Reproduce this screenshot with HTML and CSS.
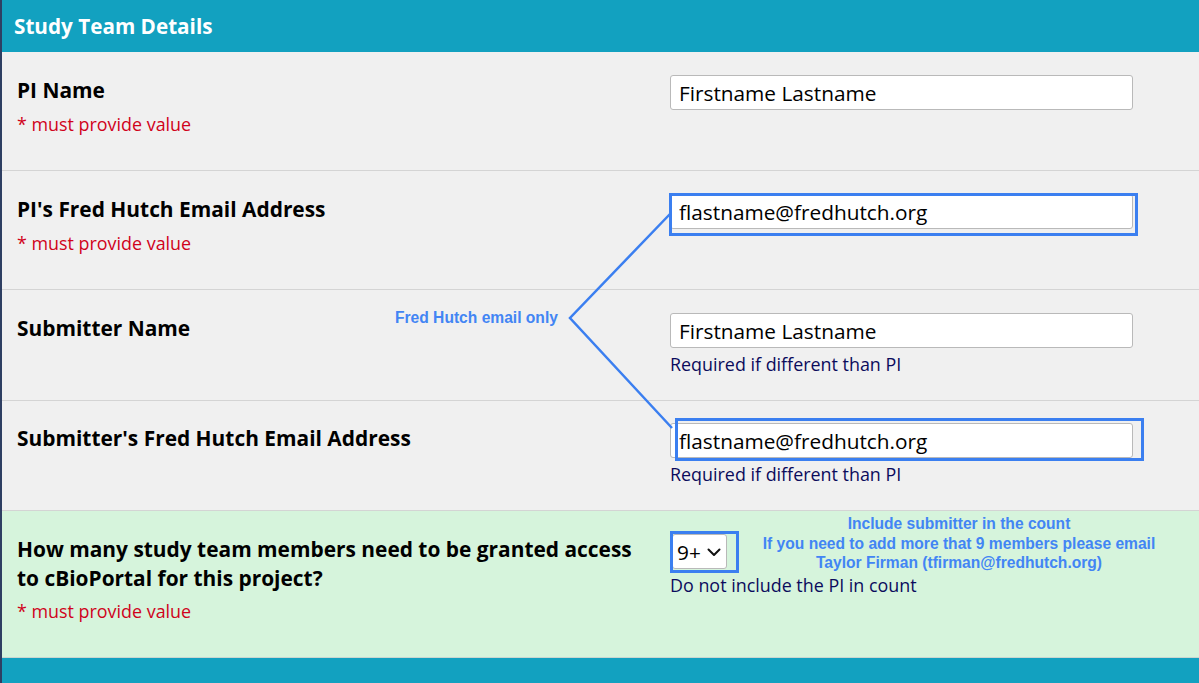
FILE: index.html
```html
<!DOCTYPE html>
<html lang="en">
<head>
<meta charset="utf-8">
<title>Study Team Details</title>
<link rel="stylesheet" href="styles.css">
</head>
<body>
<div class="page">
  <div class="header">Study Team Details</div>

  <div class="row row--std">
    <div class="label-col">
      <div class="label">PI Name</div>
      <div class="req">* must provide value</div>
    </div>
    <div class="field-col">
      <input class="text-input" type="text" value="Firstname Lastname">
    </div>
  </div>

  <div class="row row--std">
    <div class="label-col">
      <div class="label">PI's Fred Hutch Email Address</div>
      <div class="req">* must provide value</div>
    </div>
    <div class="field-col">
      <input class="text-input" type="text" value="flastname@fredhutch.org">
    </div>
  </div>

  <div class="row row--short">
    <div class="label-col">
      <div class="label">Submitter Name</div>
    </div>
    <div class="field-col">
      <input class="text-input" type="text" value="Firstname Lastname">
      <div class="help">Required if different than PI</div>
    </div>
  </div>

  <div class="row row--short2">
    <div class="label-col">
      <div class="label">Submitter's Fred Hutch Email Address</div>
    </div>
    <div class="field-col">
      <input class="text-input" type="text" value="flastname@fredhutch.org">
      <div class="help">Required if different than PI</div>
    </div>
  </div>

  <div class="row row--green">
    <div class="label-col">
      <div class="label label--wrap">How many study team members need to be granted access to cBioPortal for this project?</div>
      <div class="req">* must provide value</div>
    </div>
    <div class="field-col field-col--select">
      <div class="select-wrap">
        <select class="select">
          <option>9+</option>
        </select>
        <svg class="chev" width="14" height="9" viewBox="0 0 14 9"><path d="M1.5 1.5 L7 7 L12.5 1.5" fill="none" stroke="#111" stroke-width="2" stroke-linecap="round" stroke-linejoin="round"/></svg>
      </div>
      <div class="help">Do not include the PI in count</div>
    </div>
  </div>

  <div class="footer"></div>

  <svg class="annot-svg" width="1199" height="683" viewBox="0 0 1199 683">
    <g fill="none" stroke="#3b7ff0" stroke-width="3">
      <rect x="670.5" y="194.5" width="466" height="40"/>
      <rect x="676.5" y="419.5" width="466" height="40"/>
      <rect x="671.5" y="532.5" width="66" height="39"/>
      <polyline points="670,214 570,318 672,428" stroke-width="2.5"/>
    </g>
  </svg>
  <div class="annot annot--email">Fred Hutch email only</div>
  <div class="annot annot--count">Include submitter in the count<br>If you need to add more that 9 members please email<br>Taylor Firman (tfirman@fredhutch.org)</div>
</div>
</body>
</html>
```

FILE: styles.css
```css
html, body {
  margin: 0;
  padding: 0;
}
body {
  font-family: "Open Sans", "Noto Sans", sans-serif;
  background: #f0f0f0;
}
.page {
  position: relative;
  width: 1199px;
  height: 683px;
  overflow: hidden;
  border-left: 2px solid #2e3f62;
  box-sizing: border-box;
  display: flex;
  flex-direction: column;
}
.header {
  height: 52px;
  flex: none;
  background: #12a1c0;
  color: #fff;
  font-weight: 700;
  font-size: 20.7px;
  line-height: 52px;
  padding-left: 12px;
  box-sizing: border-box;
}
.row {
  display: flex;
  flex: none;
  padding: 23px 0 0 15px;
  box-sizing: border-box;
  border-bottom: 1px solid #d4d4d4;
  background: #f0f0f0;
}
.row--std { height: 119px; }
.row--short { height: 111px; }
.row--short2 { height: 110px; padding-top: 22px; }
.row--green {
  height: 147px;
  background: #d6f4dc;
  padding-top: 21px;
  border-bottom: 1px solid #c9d6d0;
}
.label-col {
  width: 653px;
  flex: none;
  padding-top: 1px;
  padding-right: 30px;
  box-sizing: border-box;
}
.row--green .label-col { padding-top: 3px; }
.label {
  font-weight: 700;
  font-size: 20.9px;
  line-height: 28px;
  color: #000;
}
.label--wrap { line-height: 29px; }
.req {
  color: #d0021b;
  font-size: 17.9px;
  line-height: 24px;
  margin-top: 8px;
}
.row--green .req { margin-top: 6px; }
.field-col {
  display: flex;
  flex-direction: column;
  align-items: flex-start;
}
.text-input {
  width: 463px;
  height: 35px;
  box-sizing: border-box;
  border: 1px solid #b9b9b9;
  border-radius: 3px;
  background: #fff;
  font-family: "Open Sans", "Noto Sans", sans-serif;
  font-size: 20.8px;
  color: #000;
  padding: 0 8px;
  margin: 0;
  outline: none;
}
.help {
  color: #0b0b5c;
  font-size: 17.9px;
  line-height: 22px;
  margin-top: 5px;
}
.field-col--select { padding-left: 2px; padding-top: 2px; }
.field-col--select .help { margin-top: 5px; margin-left: -2px; }
.select-wrap {
  position: relative;
  width: 55px;
  height: 35px;
}
.select {
  appearance: none;
  -webkit-appearance: none;
  width: 55px;
  height: 35px;
  box-sizing: border-box;
  border: 1px solid #b9b9b9;
  border-radius: 3px;
  background: #fff;
  font-family: "Open Sans", "Noto Sans", sans-serif;
  font-size: 20.8px;
  color: #000;
  padding: 0 0 0 4px;
  margin: 0;
  outline: none;
}
.chev {
  position: absolute;
  left: 35px;
  top: 14px;
  pointer-events: none;
}
.footer {
  flex: 1;
  background: #12a1c0;
}
.annot-svg {
  position: absolute;
  left: -2px;
  top: 0;
  pointer-events: none;
}
.annot {
  position: absolute;
  font-family: "Liberation Sans", Arial, sans-serif;
  font-weight: 700;
  font-size: 15.6px;
  color: #4285f4;
  white-space: nowrap;
}
.annot--email {
  left: 393px;
  top: 309px;
  line-height: 18px;
}
.annot--count {
  left: 757px;
  top: 514px;
  width: 400px;
  text-align: center;
  line-height: 19.5px;
}
```
